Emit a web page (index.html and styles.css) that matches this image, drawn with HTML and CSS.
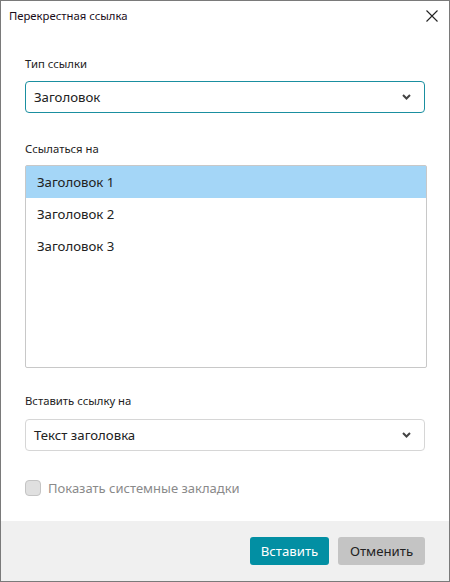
FILE: index.html
```html
<!DOCTYPE html>
<html lang="ru">
<head>
<meta charset="utf-8">
<title>Перекрестная ссылка</title>
<link rel="stylesheet" href="styles.css">
</head>
<body>
<div class="window">
  <div class="titlebar">
    <span class="title">Перекрестная ссылка</span>
    <svg class="close" width="12" height="12" viewBox="0 0 12 12"><path d="M0.5 0.5 L11.5 11.5 M11.5 0.5 L0.5 11.5" stroke="#222" stroke-width="1.1" fill="none"/></svg>
  </div>
  <div class="content">
    <div class="label first">Тип ссылки</div>
    <div class="select focused">
      <span>Заголовок</span>
      <svg class="chev" width="9" height="6" viewBox="0 0 9 6"><path d="M1 1 L4.5 4.5 L8 1" stroke="#444" stroke-width="2" fill="none"/></svg>
    </div>
    <div class="label">Ссылаться на</div>
    <div class="listbox">
      <div class="item selected">Заголовок 1</div>
      <div class="item">Заголовок 2</div>
      <div class="item">Заголовок 3</div>
    </div>
    <div class="label after-list">Вставить ссылку на</div>
    <div class="select">
      <span>Текст заголовка</span>
      <svg class="chev" width="9" height="6" viewBox="0 0 9 6"><path d="M1 1 L4.5 4.5 L8 1" stroke="#444" stroke-width="2" fill="none"/></svg>
    </div>
    <label class="checkrow">
      <span class="box"></span>
      <span class="checktext">Показать системные закладки</span>
    </label>
  </div>
  <div class="footer">
    <button class="btn primary">Вставить</button>
    <button class="btn secondary">Отменить</button>
  </div>
</div>
</body>
</html>
```

FILE: styles.css
```css
html, body {
  margin: 0;
  padding: 0;
  background: #ffffff;
}
body {
  font-family: "Noto Sans", "Open Sans", sans-serif;
  color: #222;
}
.window {
  width: 450px;
  height: 582px;
  box-sizing: border-box;
  border: 1px solid #7a7a7a;
  display: flex;
  flex-direction: column;
  background: #fff;
}
.titlebar {
  height: 31px;
  display: flex;
  align-items: center;
  justify-content: space-between;
  padding: 0 11px 0 8px;
  flex: none;
}
.title {
  font-size: 11.3px;
  color: #1a0d1a;
  position: relative;
  top: -1px;
}
.close {
  position: relative;
  top: -1px;
}
.content {
  flex: 1;
  padding: 0 24px 0 24px;
  display: flex;
  flex-direction: column;
}
.label {
  font-size: 11.3px;
  color: #222;
  line-height: 17px;
  margin-top: 27px;
  margin-bottom: 8px;
}
.label.first {
  margin-top: 23px;
  margin-bottom: 9px;
}
.label.after-list {
  margin-top: 24px;
  margin-bottom: 10px;
}
.select {
  height: 32px;
  box-sizing: border-box;
  border: 1px solid #d6d6d6;
  border-radius: 4px;
  display: flex;
  align-items: center;
  justify-content: space-between;
  padding: 0 13px 0 8px;
  font-size: 13.2px;
  color: #222;
}
.select.focused {
  border-color: #1a8fa0;
}
.chev {
  flex: none;
}
.listbox {
  height: 203px;
  box-sizing: border-box;
  border: 1px solid #c8c8c8;
  border-radius: 2px;
  margin-right: -2px;
}
.item {
  height: 32px;
  line-height: 33px;
  padding-left: 11px;
  font-size: 13.2px;
  color: #222;
}
.item.selected {
  background: #a4d6f7;
}
.checkrow {
  display: flex;
  align-items: center;
  margin-top: 28px;
  gap: 7px;
}
.box {
  width: 14px;
  height: 14px;
  border: 1px solid #c4c4c4;
  background: #e0e0e0;
  border-radius: 4px;
}
.checktext {
  font-size: 13px;
  color: #8a8a8a;
}
.footer {
  height: 60px;
  background: #f0f0f0;
  display: flex;
  justify-content: flex-end;
  align-items: flex-start;
  gap: 9px;
  padding: 16px 24px 0 0;
  box-sizing: border-box;
  flex: none;
}
.btn {
  height: 28px;
  border: none;
  border-radius: 3px;
  font-family: "Noto Sans", "Open Sans", sans-serif;
  font-size: 13.2px;
  padding: 0;
}
.btn.primary {
  width: 79px;
  background: #028fa3;
  color: #ffffff;
}
.btn.secondary {
  width: 87px;
  background: #c4c4c4;
  color: #222;
}
```
